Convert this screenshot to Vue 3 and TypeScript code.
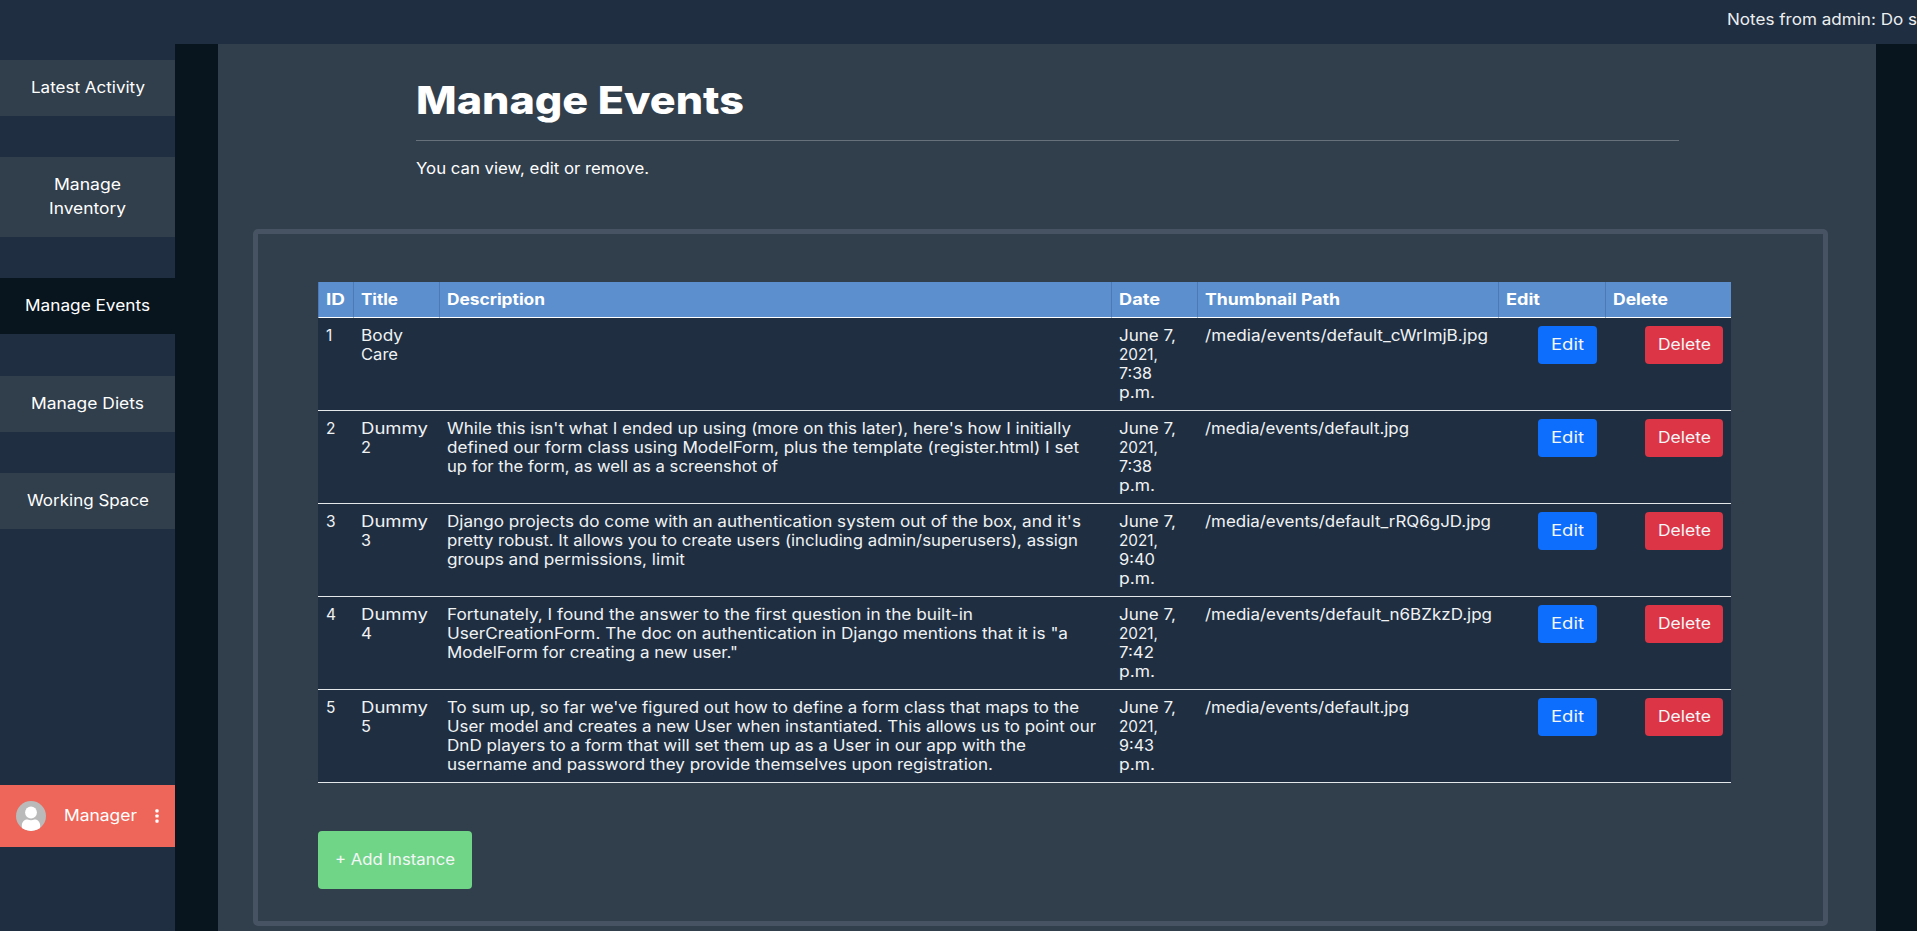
<script setup lang="ts">
import type { Directive } from 'vue'

type Line = [text: string, width: number]

interface EventRow {
  id: number
  title: Line[]
  description: Line[]
  date: Line[]
  path: Line
}

// Widens the letterforms of a line so that it fills the given width.
const vFit: Directive<HTMLElement, number> = {
  mounted(el, { value }) {
    const natural = el.getBoundingClientRect().width
    if (natural > 0) {
      el.style.width = `${value}px`
      el.style.transform = `scaleX(${value / natural})`
    }
  },
}

const nav: { active: boolean; lines: Line[] }[] = [
  { active: false, lines: [['Latest Activity', 114]] },
  { active: false, lines: [['Manage', 67], ['Inventory', 77]] },
  { active: true, lines: [['Manage Events', 125]] },
  { active: false, lines: [['Manage Diets', 113]] },
  { active: false, lines: [['Working Space', 122]] },
]

const headings: Line[] = [
  ['ID', 19], ['Title', 37], ['Description', 98], ['Date', 41],
  ['Thumbnail Path', 135], ['Edit', 34], ['Delete', 55],
]

const date = (time: string, width: number): Line[] => [
  ['June 7,', 57], ['2021,', 39], [time, width], ['p.m.', 36],
]

const events: EventRow[] = [
  {
    id: 1,
    title: [['Body', 42], ['Care', 37]],
    description: [],
    date: date('7:38', 33),
    path: ['/media/events/default_cWrImjB.jpg', 283],
  },
  {
    id: 2,
    title: [['Dummy', 67], ['2', 10]],
    description: [
      ["While this isn't what I ended up using (more on this later), here's how I initially", 624],
      ['defined our form class using ModelForm, plus the template (register.html) I set', 632],
      ['up for the form, as well as a screenshot of', 331],
    ],
    date: date('7:38', 33),
    path: ['/media/events/default.jpg', 204],
  },
  {
    id: 3,
    title: [['Dummy', 67], ['3', 10]],
    description: [
      ["Django projects do come with an authentication system out of the box, and it's", 634],
      ['pretty robust. It allows you to create users (including admin/superusers), assign', 631],
      ['groups and permissions, limit', 238],
    ],
    date: date('9:40', 36),
    path: ['/media/events/default_rRQ6gJD.jpg', 286],
  },
  {
    id: 4,
    title: [['Dummy', 67], ['4', 11]],
    description: [
      ['Fortunately, I found the answer to the first question in the built-in', 526],
      ['UserCreationForm. The doc on authentication in Django mentions that it is "a', 621],
      ['ModelForm for creating a new user."', 291],
    ],
    date: date('7:42', 35),
    path: ['/media/events/default_n6BZkzD.jpg', 287],
  },
  {
    id: 5,
    title: [['Dummy', 67], ['5', 10]],
    description: [
      ["To sum up, so far we've figured out how to define a form class that maps to the", 632],
      ['User model and creates a new User when instantiated. This allows us to point our', 649],
      ['DnD players to a form that will set them up as a User in our app with the', 579],
      ['username and password they provide themselves upon registration.', 546],
    ],
    date: date('9:43', 35),
    path: ['/media/events/default.jpg', 204],
  },
]
</script>

<template>
  <div class="app">
    <header class="topbar"><span v-fit="190" class="line">Notes from admin: Do s</span></header>
    <div class="body">
      <aside class="sidebar">
        <nav class="nav">
          <a v-for="(item, i) in nav" :key="i" class="nav-item" :class="{ active: item.active }">
            <span v-for="l in item.lines" :key="l[0]" class="row">
              <span v-fit="l[1]" class="line">{{ l[0] }}</span>
            </span>
          </a>
        </nav>
        <div class="user">
          <svg class="avatar" viewBox="0 0 30 30">
            <defs><clipPath id="disc"><circle cx="15" cy="15" r="15" /></clipPath></defs>
            <g clip-path="url(#disc)">
              <rect width="30" height="30" fill="#bababa" />
              <circle cx="15" cy="11.5" r="5.9" fill="#fff" />
              <path d="M5.8 30V25C5.8 20.5 8.8 18.6 11.5 18.6Q15 19.900 18.5 18.6C21.2 18.6 24.2 20.5 24.2 25V30Z" fill="#fff" />
            </g>
          </svg>
          <span class="user-name"><span v-fit="73" class="line">Manager</span></span>
          <svg class="dots" viewBox="0 0 4 14">
            <rect x="0.4" y="0.3" width="3.2" height="3.2" rx="0.9" />
            <rect x="0.4" y="5.4" width="3.2" height="3.2" rx="0.9" />
            <rect x="0.4" y="10.5" width="3.2" height="3.2" rx="0.9" />
          </svg>
        </div>
      </aside>
      <main class="content">
        <section class="intro">
          <h1><span v-fit="328" class="line">Manage Events</span></h1>
          <hr />
          <p><span v-fit="233" class="line">You can view, edit or remove.</span></p>
        </section>
        <section class="panel">
          <table>
            <colgroup>
              <col class="c-id" /><col class="c-title" /><col class="c-desc" /><col class="c-date" />
              <col class="c-path" /><col class="c-edit" /><col class="c-del" />
            </colgroup>
            <thead>
              <tr>
                <th v-for="h in headings" :key="h[0]"><span v-fit="h[1]" class="line">{{ h[0] }}</span></th>
              </tr>
            </thead>
            <tbody>
              <tr v-for="e in events" :key="e.id">
                <td>{{ e.id }}</td>
                <td>
                  <div v-for="(l, i) in e.title" :key="i"><span v-fit="l[1]" class="line">{{ l[0] }}</span></div>
                </td>
                <td>
                  <div v-for="(l, i) in e.description" :key="i"><span v-fit="l[1]" class="line">{{ l[0] }}</span></div>
                </td>
                <td>
                  <div v-for="(l, i) in e.date" :key="i"><span v-fit="l[1]" class="line">{{ l[0] }}</span></div>
                </td>
                <td><div><span v-fit="e.path[1]" class="line">{{ e.path[0] }}</span></div></td>
                <td class="action"><button class="btn edit"><span v-fit="33" class="line">Edit</span></button></td>
                <td class="action"><button class="btn delete"><span v-fit="53" class="line">Delete</span></button></td>
              </tr>
            </tbody>
          </table>
          <button class="add"><span v-fit="120" class="line">+ Add Instance</span></button>
        </section>
      </main>
    </div>
  </div>
</template>

<style>
body {
  margin: 0;
  overflow: hidden;
  background: #08151f;
}
</style>

<style scoped>
.app {
  display: flex;
  flex-direction: column;
  height: 931px;
  overflow: hidden;
  background: #08151f;
  color: #fff;
  font-family: Inter, "Liberation Sans", sans-serif;
  font-size: 15.5px;
  line-height: 24px;
}
.line {
  display: inline-block;
  text-align: left;
  transform-origin: 0 50%;
  white-space: pre;
}
.topbar {
  box-sizing: border-box;
  flex: none;
  height: 44px;
  padding: 8px 0 0 1727px;
  background: #1f2f41;
  color: #eceef0;
  overflow: hidden;
  white-space: nowrap;
}
.body {
  display: flex;
  flex: 1;
  min-height: 0;
}
.sidebar {
  display: flex;
  flex-direction: column;
  justify-content: space-between;
  box-sizing: border-box;
  width: 175px;
  padding: 16px 0 84px;
  background: #1f2f41;
}
.nav {
  display: flex;
  flex-direction: column;
  gap: 41.2px;
}
.nav-item {
  display: flex;
  flex-direction: column;
  align-items: center;
  padding: 16px 0;
  background: #313e4b;
}
.nav-item.active {
  background: #08151f;
}
.row {
  display: block;
  height: 24px;
}
.user {
  display: flex;
  align-items: center;
  height: 62px;
  padding: 0 16px;
  background: #ee6659;
}
.avatar {
  width: 30px;
  height: 30px;
}
.user-name {
  margin: -1px 0 0 18px;
}
.dots {
  width: 4px;
  height: 14px;
  margin-left: auto;
  fill: #fff;
}
.content {
  box-sizing: border-box;
  width: 1658px;
  margin-left: 43px;
  padding: 32px 48px 0 35px;
  background: #313e4b;
}
.intro {
  height: 153px;
  margin: 0 149px 0 163px;
}
h1 {
  margin: 0;
  font-size: 38.5px;
  font-weight: 800;
  line-height: 48px;
}
hr {
  height: 1px;
  margin: 16px 0;
  border: 0;
  background: #66717b;
}
p {
  margin: 0;
}
.panel {
  box-sizing: border-box;
  height: 697px;
  padding: 48px 60px 0;
  border: 5px solid #475362;
  border-radius: 5px;
}
table {
  width: 1413px;
  table-layout: fixed;
  border-collapse: separate;
  border-spacing: 0;
  background: #1f2f41;
  color: #f0f2f4;
  line-height: 19px;
}
.c-id { width: 35px; }
.c-title { width: 86px; }
.c-desc { width: 672px; }
.c-date { width: 86px; }
.c-path { width: 301px; }
.c-edit { width: 107px; }
.c-del { width: 126px; }
th,
td {
  box-sizing: border-box;
  padding: 8px 0 8px 8px;
  border-bottom: 1px solid #e4e7ea;
  text-align: left;
  vertical-align: top;
}
th {
  height: 36px;
  padding-left: 7px;
  border-left: 1px solid #4d7ab4;
  border-bottom-color: #fff;
  background: #5c8fcd;
  color: #fff;
  font-weight: 700;
}
td {
  height: 93px;
}
td > div {
  height: 19px;
}
td.action {
  padding-right: 8px;
  text-align: right;
}
.btn,
.add {
  padding: 0;
  border: 0;
  border-radius: 4px;
  color: #f4f6f8;
  font: inherit;
}
.btn {
  display: block;
  height: 38px;
  margin-left: auto;
  padding-bottom: 2px;
}
.edit {
  width: 59px;
  background: #0d6efd;
}
.delete {
  width: 78px;
  background: #dc3545;
}
.add {
  display: block;
  width: 154px;
  height: 58px;
  margin-top: 48px;
  background: #70d587;
}
</style>
